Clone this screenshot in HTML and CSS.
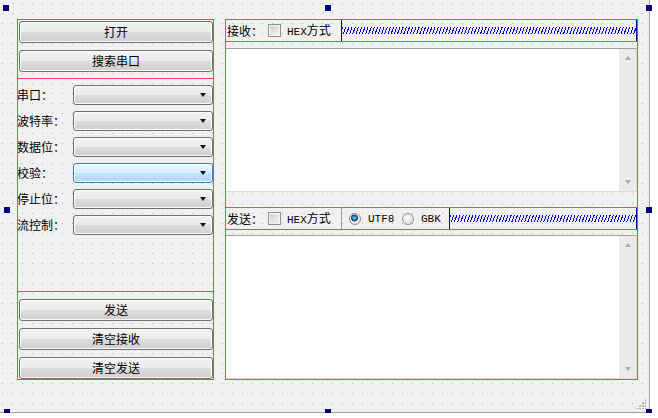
FILE: index.html
```html
<!DOCTYPE html>
<html>
  <head>
    <meta charset="utf-8" />
    <title>串口助手</title>
    <link rel="stylesheet" href="styles.css">
  </head>
  <body>
    <div class="canvas">
      <div class="form">
        <div class="side layout">
          <button class="btn first">打开</button>
          <button class="btn">搜索串口</button>

          <div class="params layout">
            <div class="row"><span class="lbl">串口：</span><div class="combo"></div></div>
            <div class="row"><span class="lbl">波特率：</span><div class="combo"></div></div>
            <div class="row"><span class="lbl">数据位：</span><div class="combo"></div></div>
            <div class="row"><span class="lbl">校验：</span><div class="combo hover"></div></div>
            <div class="row"><span class="lbl">停止位：</span><div class="combo"></div></div>
            <div class="row"><span class="lbl">流控制：</span><div class="combo"></div></div>
          </div>

          <button class="btn">发送</button>
          <button class="btn">清空接收</button>
          <button class="btn">清空发送</button>
        </div>

        <div class="main layout">
          <div class="bar layout">
            <span class="tag">接收：</span>
            <label class="chk"><span class="box"></span><span><span class="en">HEX</span>方式</span></label>
            <div class="spring"></div>
          </div>
          <div class="edit recv">
            <div class="vscroll"><span class="arr up"></span><span class="arr down"></span></div>
          </div>

          <div class="bar send layout">
            <span class="tag">发送：</span>
            <label class="chk"><span class="box"></span><span><span class="en">HEX</span>方式</span></label>
            <span class="sep"></span>
            <label class="opt utf"><span class="radio on"></span><span class="en">UTF8</span></label>
            <label class="opt gbk"><span class="radio"></span><span class="en">GBK</span></label>
            <div class="spring"></div>
          </div>
          <div class="edit sendbox">
            <div class="vscroll"><span class="arr up"></span><span class="arr down"></span></div>
          </div>
        </div>
      </div>

      <span class="handle h-tl"></span>
      <span class="handle h-tm"></span>
      <span class="handle h-tr"></span>
      <span class="handle h-ml"></span>
      <span class="handle h-mr"></span>
      <span class="handle h-bl"></span>
      <span class="handle h-bm"></span>
      <span class="handle h-br"></span>
      <span class="grip"></span>
    </div>
  </body>
</html>
```

FILE: styles.css
```css
body {
  margin: 0;
  background: #fff;
  font-family: "Noto Sans CJK SC", "Liberation Sans", sans-serif;
  font-size: 12px;
  line-height: 14px;
  color: #000;
}

.canvas {
  position: relative;
  width: 649px;
  height: 412px;
  border-right: 1px solid #a0a0a0;
  border-bottom: 1px solid #a0a0a0;
  background-color: #f0f0f0;
  background-image: radial-gradient(circle at 2.5px 3.5px, #b2b2b2 0.5px, transparent 1px);
  background-size: 10px 10px;
}

.form {
  display: flex;
  gap: 11px;
  height: 100%;
  padding: 19px 11px 32px 17px;
  box-sizing: border-box;
}

/* red layout frames drawn over the widgets, like designer does */
.layout {
  position: relative;
}
.layout::after {
  content: "";
  position: absolute;
  inset: 0;
  border: 1px solid #f24b4b;
  pointer-events: none;
  z-index: 2;
}

.en {
  font-family: "Liberation Mono", monospace;
  font-size: 11px;
}

/* left column */
.side {
  width: 197px;
  display: flex;
  flex-direction: column;
}

.btn {
  appearance: none;
  height: 22px;
  margin: 7px 1px 0 2px;
  padding: 0;
  box-sizing: border-box;
  border: 1px solid #707070;
  border-radius: 3px;
  background: linear-gradient(#f3f3f3 0%, #ebebeb 48%, #dddddd 52%, #cfcfcf 100%);
  box-shadow: inset 0 0 0 1px #fbfbfb;
  font: inherit;
  color: #000;
}
.btn.first {
  margin-top: 2px;
}

.params {
  height: 214px;
  margin-top: 6px;
  padding-top: 7px;
  box-sizing: border-box;
  display: flex;
  flex-direction: column;
  gap: 6px;
}
.params + .btn {
  margin-top: 7px;
}

.row {
  display: flex;
  align-items: center;
  height: 20px;
  padding-right: 1px;
}
.lbl {
  width: 56px;
}

.combo {
  position: relative;
  width: 140px;
  height: 20px;
  box-sizing: border-box;
  border: 1px solid #707070;
  border-radius: 3px;
  background: linear-gradient(#f3f3f3 0%, #ebebeb 48%, #dddddd 52%, #cfcfcf 100%);
  box-shadow: inset 0 0 0 1px #fbfbfb;
}
.combo::after {
  content: "";
  position: absolute;
  right: 6px;
  top: 7px;
  border-top: 4px solid #111;
  border-left: 3.5px solid transparent;
  border-right: 3.5px solid transparent;
}
.combo.hover {
  border-color: #3c7fb1;
  background: linear-gradient(#eaf6fd 0%, #d9f0fc 48%, #bee6fd 52%, #a7d9f5 100%);
}

/* right column */
.main {
  width: 413px;
  display: flex;
  flex-direction: column;
}

.bar {
  height: 23px;
  flex: none;
  display: flex;
  align-items: center;
  padding-left: 2px;
  box-sizing: border-box;
}
.bar.send {
  margin-top: 15px;
}

.tag {
  width: 41px;
  flex: none;
}

.chk {
  width: 73px;
  flex: none;
  display: flex;
  align-items: center;
}
.box {
  width: 13px;
  height: 13px;
  margin-right: 6px;
  box-sizing: border-box;
  border: 1px solid #8e8f8f;
  background: linear-gradient(135deg, #cbcfd5, #f6f6f6);
  box-shadow: inset 0 0 0 1px #f4f4f4;
}

.sep {
  width: 1px;
  align-self: stretch;
  margin: 1px 0;
  background: #a0a0a0;
}

.opt {
  display: flex;
  align-items: center;
  flex: none;
}
.opt.utf {
  width: 53px;
  margin-left: 7px;
}
.opt.gbk {
  width: 47px;
}
.radio {
  width: 12px;
  height: 12px;
  margin-right: 7px;
  box-sizing: border-box;
  border: 1px solid #8e8f8f;
  border-radius: 50%;
  background: radial-gradient(circle at 40% 40%, #fcfcfc, #d4d4d4);
}
.radio.on {
  background: radial-gradient(circle at 45% 40%, #8cc4ec 0, #1e5e9a 2.5px, #163f6a 3.2px, #f2f2f2 3.8px, #d4d4d4 100%);
}

.spring {
  flex: 1;
  align-self: stretch;
  margin: 1px 1px 1px 0;
  border-left: 1px solid #0000b0;
  border-right: 1px solid #0000b0;
  display: flex;
  align-items: center;
}
.spring::before {
  content: "";
  flex: 1;
  height: 7px;
  background: repeating-linear-gradient(110deg, #0000c8 0 1px, transparent 1px 3px);
}

.edit {
  height: 144px;
  flex: none;
  margin-right: 1px;
  box-sizing: border-box;
  background: #fff;
  border: 1px solid #dcdcdc;
  border-top-color: #a0a0a0;
  border-left-color: #a0a0a0;
  display: flex;
  justify-content: flex-end;
}
.edit.recv {
  margin-top: 6px;
}
.edit.sendbox {
  margin-top: 5px;
}

.vscroll {
  width: 17px;
  background: #ebebeb;
  display: flex;
  flex-direction: column;
  justify-content: space-between;
  align-items: center;
  padding: 7px 0;
}
.arr {
  width: 0;
  height: 0;
  border-left: 3.5px solid transparent;
  border-right: 3.5px solid transparent;
}
.arr.up {
  border-bottom: 4px solid #a6a6a6;
}
.arr.down {
  border-top: 4px solid #a6a6a6;
}

/* selection handles of the form */
.handle {
  position: absolute;
  width: 6px;
  height: 6px;
  background: #000080;
}
.h-tl { left: 3px; top: 5px; }
.h-tm { left: 325px; top: 5px; }
.h-tr { left: 646px; top: 5px; }
.h-ml { left: 4px; top: 207px; }
.h-mr { left: 646px; top: 207px; }
.h-bl { left: 4px; top: 409px; }
.h-bm { left: 325px; top: 409px; }
.h-br { left: 646px; top: 409px; }

.grip {
  position: absolute;
  left: 636px;
  top: 399px;
  width: 10px;
  height: 10px;
  background: radial-gradient(circle at 1px 1px, #b0b0b0 0.8px, transparent 1.2px) 0 0 / 3px 3px;
  clip-path: polygon(100% 0, 100% 100%, 0 100%);
}
```
